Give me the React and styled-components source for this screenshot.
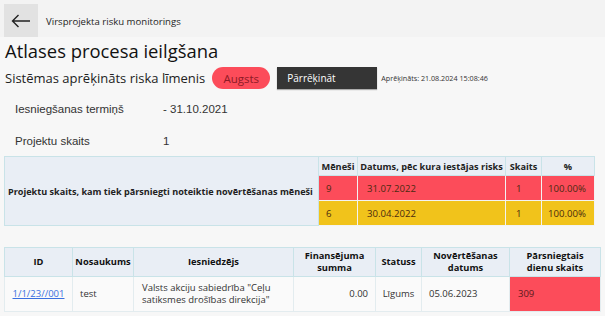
import styled, { createGlobalStyle } from 'styled-components'

const GlobalStyle = createGlobalStyle`
	body {
		margin: 0;
		background: #f7f7f7;
		font-family: 'Open Sans', 'Noto Sans', sans-serif;
		color: #222;
	}
`

const thresholds = [
	{ months: 9, date: '31.07.2022', count: 1, pct: '100.00%', tone: 'red' },
	{ months: 6, date: '30.04.2022', count: 1, pct: '100.00%', tone: 'yellow' },
]

const App = () => {
	return (
		<Page>
			<GlobalStyle />
			<TopBar>
				<BackButton>
					<svg width="20" height="14" viewBox="0 0 20 14" fill="none" stroke="#222" strokeWidth="1.4">
						<path d="M19 7H1.5M7.5 1L1.5 7l6 6" />
					</svg>
				</BackButton>
				<TopTitle>Virsprojekta risku monitorings</TopTitle>
			</TopBar>

			<Heading>Atlases procesa ieilgšana</Heading>
			<RiskRow>
				<RiskLabel>Sistēmas aprēķināts riska līmenis</RiskLabel>
				<Pill>Augsts</Pill>
				<DarkButton>Pārrēķināt</DarkButton>
				<Stamp>Aprēķināts: 21.08.2024 15:08:46</Stamp>
			</RiskRow>

			<InfoList>
				<InfoRow>
					<span>Iesniegšanas termiņš</span>
					<span>- 31.10.2021</span>
				</InfoRow>
				<InfoRow>
					<span>Projektu skaits</span>
					<span>1</span>
				</InfoRow>
			</InfoList>

			<Table1>
				<colgroup>
					<col style={{ width: 314 }} />
					<col style={{ width: 39 }} />
					<col style={{ width: 148 }} />
					<col style={{ width: 36 }} />
					<col style={{ width: 53 }} />
				</colgroup>
				<tbody>
					<tr>
						<LeadCell rowSpan={3}>Projektu skaits, kam tiek pārsniegti noteiktie novērtēšanas mēneši</LeadCell>
						<Th>Mēneši</Th>
						<Th>Datums, pēc kura iestājas risks</Th>
						<Th>Skaits</Th>
						<Th>%</Th>
					</tr>
					{thresholds.map((row, index) => (
						<tr key={index}>
							<Td $tone={row.tone} $pad={7}>{row.months}</Td>
							<Td $tone={row.tone} $pad={9}>{row.date}</Td>
							<Td $tone={row.tone} $pad={10}>{row.count}</Td>
							<Td $tone={row.tone} $right>{row.pct}</Td>
						</tr>
					))}
				</tbody>
			</Table1>

			<Table2>
				<colgroup>
					<col style={{ width: 68 }} />
					<col style={{ width: 61 }} />
					<col style={{ width: 160 }} />
					<col style={{ width: 82 }} />
					<col style={{ width: 46 }} />
					<col style={{ width: 88 }} />
					<col style={{ width: 91 }} />
				</colgroup>
				<thead>
					<tr>
						<Th2>ID</Th2>
						<Th2>Nosaukums</Th2>
						<Th2>Iesniedzējs</Th2>
						<Th2>Finansējuma<br />summa</Th2>
						<Th2>Statuss</Th2>
						<Th2>Novērtēšanas<br />datums</Th2>
						<Th2>Pārsniegtais<br />dienu skaits</Th2>
					</tr>
				</thead>
				<tbody>
					<tr>
						<Td2 $center><IdLink href="#">1/1/23//001</IdLink></Td2>
						<Td2 $pad={7}>test</Td2>
						<Td2 $pad={8}>Valsts akciju sabiedrība "Ceļu<br />satiksmes drošības direkcija"</Td2>
						<Td2 $right>0.00</Td2>
						<Td2 $center>Līgums</Td2>
						<Td2 $pad={7}>05.06.2023</Td2>
						<Td2 $tone="red" $pad={8}>309</Td2>
					</tr>
				</tbody>
			</Table2>
		</Page>
	)
}

export default App

const tones = {
	red: '#fc4c5a',
	yellow: '#f1c31b',
}

const Page = styled.div`
	width: 605px;
	height: 316px;
	overflow: hidden;
	display: flex;
	flex-direction: column;
`
const TopBar = styled.div`
	height: 37px;
	padding: 4px 0 0 4px;
	box-sizing: border-box;
	display: flex;
	align-items: flex-start;
	background: #f3f3f3;
`
const BackButton = styled.div`
	width: 34px;
	height: 33px;
	background: #e2e2e2;
	display: flex;
	align-items: center;
	justify-content: center;
`
const TopTitle = styled.div`
	font-size: 9.6px;
	margin: 11px 0 0 8px;
	color: #1e1e1e;
`
const Heading = styled.div`
	font-size: 18.4px;
	line-height: 26px;
	margin: 1px 0 0 5px;
	color: #111;
`
const RiskRow = styled.div`
	display: flex;
	align-items: center;
	height: 22px;
	padding-left: 5px;
	margin-top: 3px;
`
const RiskLabel = styled.div`
	font-size: 13px;
	color: #222;
`
const Pill = styled.div`
	margin-left: 7px;
	width: 58px;
	height: 22px;
	border-radius: 11px;
	background: #fc4c5a;
	color: #8e1a26;
	font-size: 11.5px;
	display: flex;
	align-items: center;
	justify-content: center;
`
const DarkButton = styled.div`
	margin-left: 7px;
	width: 100px;
	height: 22px;
	background: #353535;
	color: #fff;
	font-size: 10px;
	padding-left: 10px;
	box-sizing: border-box;
	display: flex;
	align-items: center;
	box-shadow: 0 1px 1px rgba(0, 0, 0, 0.3);
`
const Stamp = styled.div`
	margin-left: 4px;
	font-size: 7.2px;
	color: #333;
`
const InfoList = styled.div`
	font-family: 'Liberation Sans', Arial, sans-serif;
	font-size: 11.5px;
	color: #333;
	padding: 13px 0 0 15px;
	display: flex;
	flex-direction: column;
	gap: 18px;
`
const InfoRow = styled.div`
	display: grid;
	grid-template-columns: 148px 1fr;
	line-height: 14px;
`
const Table1 = styled.table`
	margin: 8px 0 0 4px;
	width: 590px;
	border-collapse: collapse;
	table-layout: fixed;
	font-size: 9.6px;
	color: #222;
`
const LeadCell = styled.td`
	background: #e9eef5;
	border: 1px solid #c9e3e8;
	font-weight: 700;
	font-size: 9.1px;
	padding: 0 3px;
	white-space: nowrap;
`
const Th = styled.td`
	height: 18px;
	background: #e9eef5;
	border: 1px solid #c9e3e8;
	font-weight: 700;
	font-size: 9.2px;
	text-align: center;
	padding: 0;
	white-space: nowrap;
`
const Td = styled.td`
	height: 24px;
	background: ${(p) => tones[p.$tone]};
	border: 1px solid #f3f3f3;
	padding: 0 8px 0 ${(p) => p.$pad || 4}px;
	text-align: ${(p) => (p.$right ? 'right' : 'left')};
	color: #4a2a10;
	white-space: nowrap;
`
const Table2 = styled.table`
	margin: 21px 0 0 4px;
	width: 596px;
	border-collapse: collapse;
	table-layout: fixed;
	font-size: 9.5px;
	color: #333;
`
const Th2 = styled.th`
	height: 28px;
	background: #e9eef5;
	border: 1px solid #c9e3e8;
	font-weight: 700;
	font-size: 9.3px;
	line-height: 12px;
	color: #111;
	padding: 0 2px;
	white-space: nowrap;
`
const Td2 = styled.td`
	height: 34px;
	background: ${(p) => (p.$tone ? tones[p.$tone] : '#fafafa')};
	border: 1px solid #e3ecef;
	padding: 0 ${(p) => (p.$right ? 7 : 3)}px 0 ${(p) => p.$pad || 3}px;
	text-align: ${(p) => (p.$right ? 'right' : p.$center ? 'center' : 'left')};
	line-height: 12px;
	color: ${(p) => (p.$tone ? '#5a1a1a' : '#333')};
	white-space: nowrap;
`
const IdLink = styled.a`
	color: #3a6fe0;
	text-decoration: underline;
`
